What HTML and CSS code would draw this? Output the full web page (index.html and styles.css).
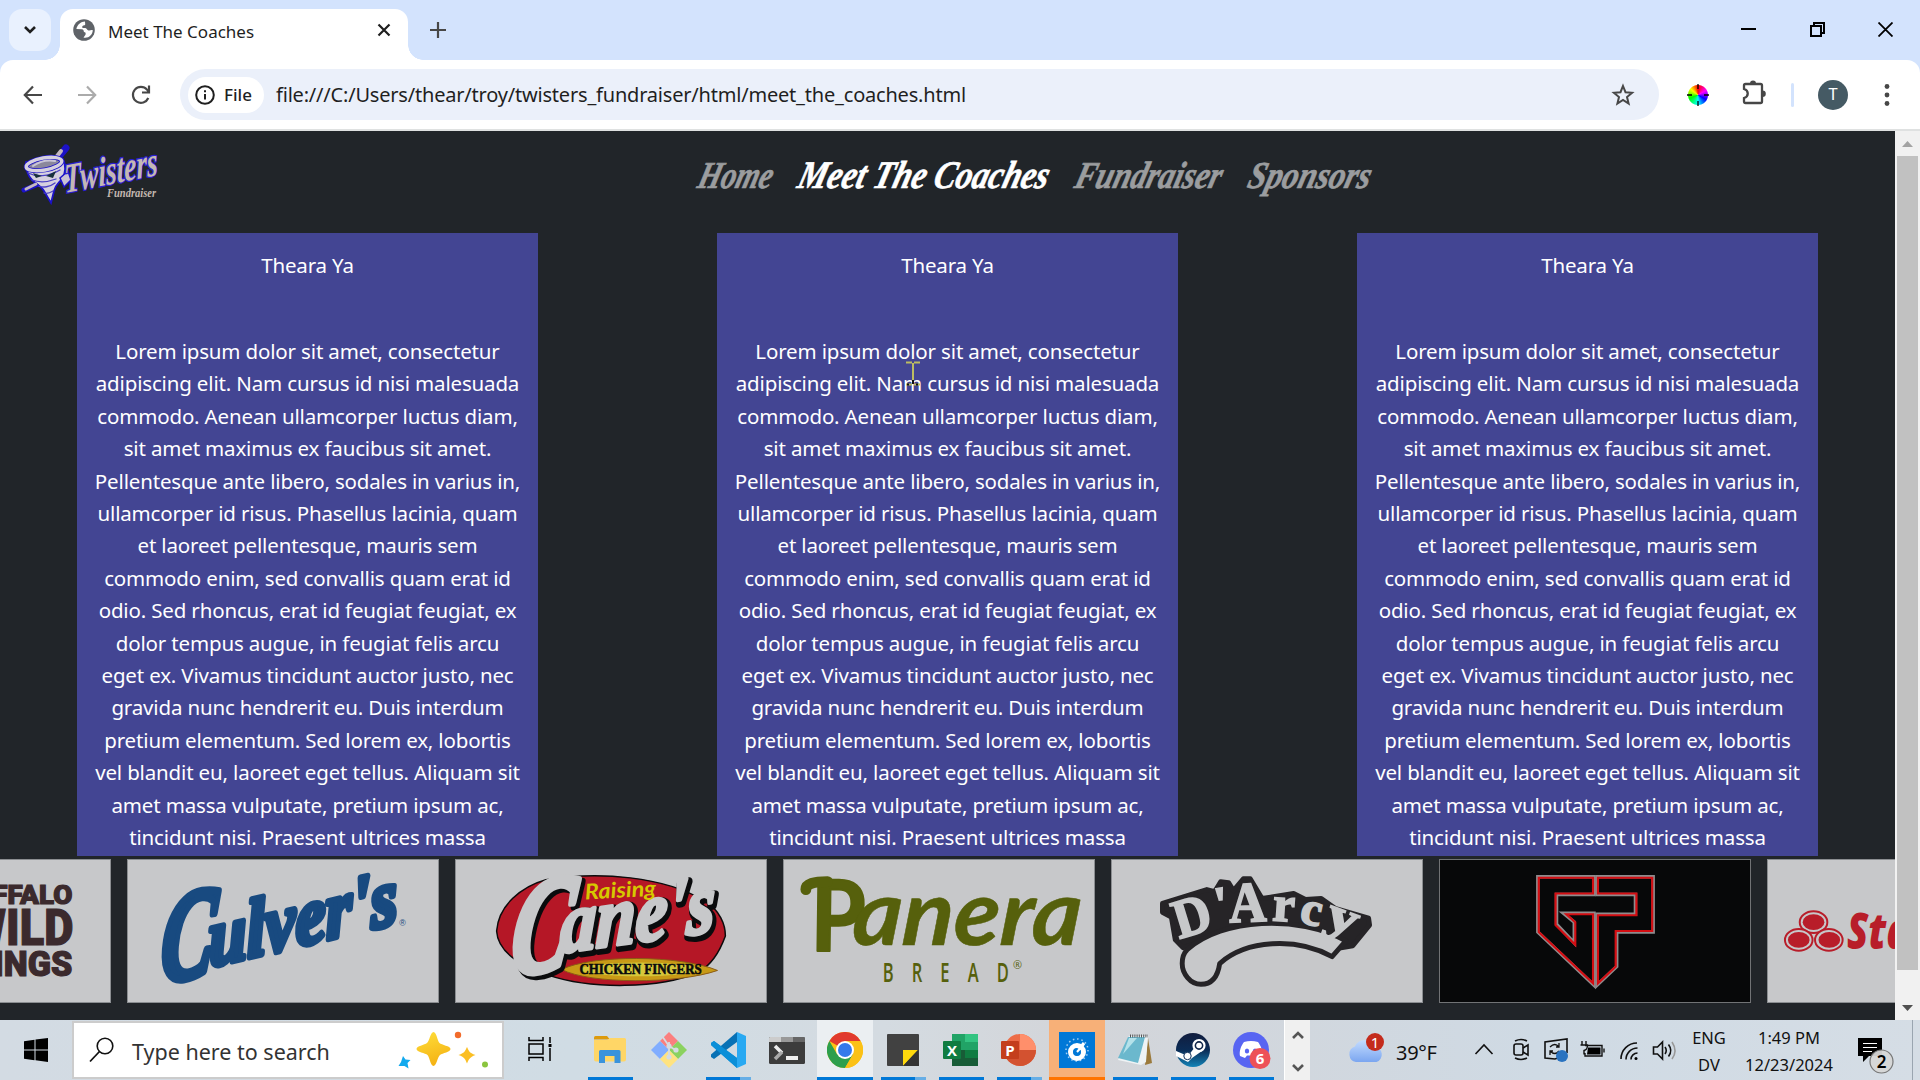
FILE: index.html
```html
<!DOCTYPE html>
<html lang="en">
<head>
<meta charset="utf-8">
<title>Meet The Coaches</title>
<link rel="stylesheet" href="styles.css">
</head>
<body>
<div class="screen">
  <div class="tabstrip">
    <div class="tab-search"><svg width="16" height="16" viewBox="0 0 16 16"><path d="M3 5l5 5 5-5" fill="none" stroke="#1f1f1f" stroke-width="2.6"/></svg></div>
    <div class="tab">
      <svg width="22" height="22" viewBox="0 0 22 22"><circle cx="11" cy="11" r="10.8" fill="#5f6368"/><path d="M12 2.5c-4 0-8 3.500-8.600 7.500l5.300.300c1.800.200 2.200 1.200 2.200 2.800 1.800 0 2 1 1.600 2.600l-2 2.800c5 1 9-2.500 9.300-7.300-1.800-.700-2.500.500-4.300.200-1.600-.300-1.500-2.200-3.200-2.400H9.500c-.800-2 .300-2.500 1.900-2.700 1.400-.200.600-1.700.6-3.800z" fill="#fff"/></svg>
      <span class="tab-title">Meet The Coaches</span>
      <svg class="tab-close" width="14" height="14" viewBox="0 0 14 14"><path d="M1.500 1.500l11 11m0-11l-11 11" stroke="#1f1f1f" stroke-width="2.200"/></svg>
    </div>
    <svg class="new-tab" width="16" height="16" viewBox="0 0 16 16"><path d="M8 0v16M0 8h16" stroke="#474747" stroke-width="2.200"/></svg>
    <div class="window-buttons">
      <svg width="15" height="15" viewBox="0 0 15 15"><path d="M0 7h15" stroke="#000" stroke-width="2"/></svg>
      <svg width="15" height="15" viewBox="0 0 15 15"><path d="M1 4h10v10H1zM4 4V1h10v10h-3" fill="none" stroke="#000" stroke-width="2"/></svg>
      <svg width="15" height="15" viewBox="0 0 15 15"><path d="M.5.500l14 14m0-14l-14 14" stroke="#000" stroke-width="1.800"/></svg>
    </div>
  </div>

  <div class="toolbar-wrap">
  <div class="toolbar">
    <div class="nav-buttons">
      <svg width="20" height="20" viewBox="0 0 20 20"><path d="M19 10H2M10 1.500L1.800 10l8.200 8.500" fill="none" stroke="#474747" stroke-width="2.200"/></svg>
      <svg width="20" height="20" viewBox="0 0 20 20"><path d="M1 10h17M10 1.500l8.200 8.500-8.200 8.500" fill="none" stroke="#ababab" stroke-width="2.200"/></svg>
      <svg width="20" height="20" viewBox="0 0 20 20"><path d="M17.300 13A8 8 0 1 1 16 4.600l2 2.400M18 .500v7h-7" fill="none" stroke="#474747" stroke-width="2.200"/></svg>
    </div>
    <div class="omnibox">
      <div class="chip"><svg width="20" height="20" viewBox="0 0 20 20"><circle cx="10" cy="10" r="8.800" fill="none" stroke="#1f1f1f" stroke-width="2"/><path d="M10 9v5.500M10 5.200v2" stroke="#1f1f1f" stroke-width="2"/></svg><span>File</span></div>
      <span class="url">file:///C:/Users/thear/troy/twisters_fundraiser/html/meet_the_coaches.html</span>
      <svg class="star" width="24" height="24" viewBox="0 0 24 24"><path d="M12 3l2.500 6.200 6.600.500-5.100 4.300 1.600 6.500-5.600-3.500-5.600 3.500L8 14 2.900 9.700l6.600-.5z" fill="none" stroke="#474747" stroke-width="2"/></svg>
    </div>
    <div class="wheel"><svg width="22" height="22" viewBox="0 0 22 22"><path d="M11 0v5M11 17v5M0 11h5M17 11h5" stroke="#000" stroke-width="1.300"/></svg></div>
    <svg class="puzzle" width="24" height="25" viewBox="0 0 24 25"><path d="M2 5.500Q2 4 3.500 4h15Q20 4 20 5.500v16q0 1.500-1.500 1.500h-15Q2 23 2 21.500V18c5-1.500 5-7.500 0-9z" fill="none" stroke="#474747" stroke-width="2.300"/><path d="M8 3.500a3 3 0 0 1 6 0zM20.500 10.500a3.300 3.300 0 0 1 0 6.600z" fill="#474747"/></svg>
    <div class="sep"></div>
    <div class="avatar">T</div>
    <svg class="dots" width="6" height="24" viewBox="0 0 6 24"><g fill="#474747"><circle cx="3" cy="3.500" r="2.400"/><circle cx="3" cy="12" r="2.400"/><circle cx="3" cy="20.500" r="2.400"/></g></svg>
  </div>
  </div>

  <div class="viewport">
    <div class="page">
      <header class="site-header">
        <svg class="brand" width="150" height="66" viewBox="14 140 150 66">
          <g fill="none" stroke-linecap="round">
            <path d="M56 160l10-12" stroke="#1c12c8" stroke-width="7"/>
            <path d="M54 160l7-9" stroke="#c4b8c0" stroke-width="4"/>
            <path d="M26 166c0 9 2 14 6 18 4 4 9 6 12 11l7 12 3-12c2-7 4-7 8-12 4-6 4-14 1-20z" transform="translate(0 -4)" fill="#d5d0df" stroke="#1c12c8" stroke-width="1.800"/>
            <ellipse cx="44" cy="164" rx="18" ry="6" transform="rotate(-10 44 164)" fill="#8b889c" stroke="#1c12c8" stroke-width="5"/>
            <ellipse cx="44" cy="164" rx="18" ry="6" transform="rotate(-10 44 164)" stroke="#d5d0df" stroke-width="3.500"/>
            <path d="M33 166q10-7 22-5" stroke="#c9c5d8" stroke-width="2"/>
            <path d="M28 173c8 4 20 4 32-3M32 180c8 3 16 2 24-1M38 186c5 2 12 1 17-3M44 193c3 1 6 0 9-2" stroke="#4a40c4" stroke-width="1.300"/>
            <path d="M33 173l9 3-6 2zM46 176l10-5-3 7z" fill="#17303c" stroke="none"/>
            <path d="M24 190l12-5" stroke="#1c12c8" stroke-width="5"/><path d="M26 189l10-5" stroke="#c4b8c0" stroke-width="3"/>
            <path d="M60 178l8-7 3 9-7 7z" fill="#c9c3d4" stroke="#1c12c8" stroke-width="1.500"/>
          </g>
          <text transform="translate(65 193) rotate(-11) skewX(-8)" class="brush" font-size="41" textLength="95" lengthAdjust="spacingAndGlyphs" fill="#c4b8b4" stroke="#2a1ed0" stroke-width="2.600" paint-order="stroke">Twisters</text>
          <text x="107" y="197" class="brush" font-size="13" textLength="49" lengthAdjust="spacingAndGlyphs" fill="#c4b8b0">Fundraiser</text>
        </svg>
        <nav class="site-nav">
          <svg width="80" height="50" viewBox="0 0 80 50"><text class="brush" transform="translate(1 37) skewX(-15)" font-size="38" textLength="74" lengthAdjust="spacingAndGlyphs" fill="#9b9d9f" stroke="#9b9d9f">Home</text></svg>
          <svg width="256" height="50" viewBox="0 0 256 50"><text class="brush" transform="translate(0 37) skewX(-15)" font-size="39" textLength="250" lengthAdjust="spacingAndGlyphs" fill="#fff" stroke="#fff">Meet The Coaches</text></svg>
          <svg width="152" height="50" viewBox="0 0 152 50"><text class="brush" transform="translate(0 37) skewX(-15)" font-size="38" textLength="146" lengthAdjust="spacingAndGlyphs" fill="#9b9d9f" stroke="#9b9d9f">Fundraiser</text></svg>
          <svg width="128" height="50" viewBox="0 0 128 50"><text class="brush" transform="translate(0 37) skewX(-15)" font-size="38" textLength="122" lengthAdjust="spacingAndGlyphs" fill="#9b9d9f" stroke="#9b9d9f">Sponsors</text></svg>
        </nav>
      </header>

      <main class="coaches">
        <article class="coach"><h2>Theara Ya</h2><p>Lorem ipsum dolor sit amet, consectetur<br>adipiscing elit. Nam cursus id nisi malesuada<br>commodo. Aenean ullamcorper luctus diam,<br>sit amet maximus ex faucibus sit amet.<br>Pellentesque ante libero, sodales in varius in,<br>ullamcorper id risus. Phasellus lacinia, quam<br>et laoreet pellentesque, mauris sem<br>commodo enim, sed convallis quam erat id<br>odio. Sed rhoncus, erat id feugiat feugiat, ex<br>dolor tempus augue, in feugiat felis arcu<br>eget ex. Vivamus tincidunt auctor justo, nec<br>gravida nunc hendrerit eu. Duis interdum<br>pretium elementum. Sed lorem ex, lobortis<br>vel blandit eu, laoreet eget tellus. Aliquam sit<br>amet massa vulputate, pretium ipsum ac,<br>tincidunt nisi. Praesent ultrices massa</p></article>
        <article class="coach"><h2>Theara Ya</h2><p>Lorem ipsum dolor sit amet, consectetur<br>adipiscing elit. Nam cursus id nisi malesuada<br>commodo. Aenean ullamcorper luctus diam,<br>sit amet maximus ex faucibus sit amet.<br>Pellentesque ante libero, sodales in varius in,<br>ullamcorper id risus. Phasellus lacinia, quam<br>et laoreet pellentesque, mauris sem<br>commodo enim, sed convallis quam erat id<br>odio. Sed rhoncus, erat id feugiat feugiat, ex<br>dolor tempus augue, in feugiat felis arcu<br>eget ex. Vivamus tincidunt auctor justo, nec<br>gravida nunc hendrerit eu. Duis interdum<br>pretium elementum. Sed lorem ex, lobortis<br>vel blandit eu, laoreet eget tellus. Aliquam sit<br>amet massa vulputate, pretium ipsum ac,<br>tincidunt nisi. Praesent ultrices massa</p></article>
        <article class="coach"><h2>Theara Ya</h2><p>Lorem ipsum dolor sit amet, consectetur<br>adipiscing elit. Nam cursus id nisi malesuada<br>commodo. Aenean ullamcorper luctus diam,<br>sit amet maximus ex faucibus sit amet.<br>Pellentesque ante libero, sodales in varius in,<br>ullamcorper id risus. Phasellus lacinia, quam<br>et laoreet pellentesque, mauris sem<br>commodo enim, sed convallis quam erat id<br>odio. Sed rhoncus, erat id feugiat feugiat, ex<br>dolor tempus augue, in feugiat felis arcu<br>eget ex. Vivamus tincidunt auctor justo, nec<br>gravida nunc hendrerit eu. Duis interdum<br>pretium elementum. Sed lorem ex, lobortis<br>vel blandit eu, laoreet eget tellus. Aliquam sit<br>amet massa vulputate, pretium ipsum ac,<br>tincidunt nisi. Praesent ultrices massa</p></article>
      </main>

      <footer class="sponsors">
        <svg class="sponsor" viewBox="-201 859 312 144"><g class="block" fill="#3b2a2d" stroke="#3b2a2d" stroke-width="1.200" text-anchor="end">
          <text x="74" y="903.500" font-size="27" textLength="118" lengthAdjust="spacingAndGlyphs">BUFFALO</text>
          <text x="75" y="945" font-size="50" textLength="108" lengthAdjust="spacingAndGlyphs">WILD</text>
          <text x="74" y="977" font-size="36" textLength="110" lengthAdjust="spacingAndGlyphs">WINGS</text></g></svg>
        <svg class="sponsor" viewBox="127 859 312 144"><g class="brush" fill="#184a80" stroke="#184a80" stroke-linejoin="round">
          <text transform="translate(157 983) rotate(-9) skewX(-14)" font-size="128" textLength="54" lengthAdjust="spacingAndGlyphs" stroke-width="8">C</text>
          <text transform="translate(209 967) rotate(-13) skewX(-10)" font-size="82" textLength="196" lengthAdjust="spacingAndGlyphs" stroke-width="6">ulver's</text></g>
          <text x="401" y="926" font-size="9" font-family="Liberation Sans, sans-serif" fill="#184a80">®</text></svg>
        <svg class="sponsor" viewBox="455 859 312 144">
          <path d="M495 931C497 905 520 886 545 879 600 870 665 876 705 900 722 910 727 925 727 936 720 955 712 965 700 973 660 990 590 990 548 976 515 965 496 950 495 931z" fill="#b51726" stroke="#0b0b0c" stroke-width="1.500"/>
          <path d="M561 970c30-15 120-15 158 1-40 14-130 14-158-1z" fill="#c89a16" stroke="#8a5a14" stroke-width="1"/>
          <ellipse cx="640" cy="970" rx="60" ry="7" fill="#d6c83a"/>
          <g class="brush" fill="#0a0b0d" stroke="#0a0b0d" stroke-width="9" stroke-linejoin="round">
            <text transform="translate(509 978) rotate(-6) skewX(-14)" font-size="138" textLength="60" lengthAdjust="spacingAndGlyphs">C</text>
            <text transform="translate(561 956) rotate(-8) skewX(-10)" font-size="86" textLength="158" lengthAdjust="spacingAndGlyphs">ane's</text></g>
          <g class="brush" fill="#c7c8ca" stroke="#c7c8ca" stroke-width="7" stroke-linejoin="round">
            <text transform="translate(506 975) rotate(-6) skewX(-14)" font-size="138" textLength="60" lengthAdjust="spacingAndGlyphs">C</text>
            <text transform="translate(559 953) rotate(-8) skewX(-10)" font-size="86" textLength="158" lengthAdjust="spacingAndGlyphs" stroke-width="4">ane's</text></g>
          <text transform="translate(585 899) rotate(-3)" font-family="Lato, sans-serif" font-weight="700" font-style="italic" font-size="22" textLength="72" lengthAdjust="spacingAndGlyphs" fill="#d6c800">Raising</text>
          <text x="579" y="975" font-family="Liberation Serif, serif" font-weight="700" font-size="15" textLength="124" lengthAdjust="spacingAndGlyphs" fill="#0a0b0d" stroke="#0a0b0d" stroke-width=".6">CHICKEN FINGERS</text></svg>
        <svg class="sponsor" viewBox="783 859 312 144"><g fill="#56600c" stroke="#56600c" font-family="Lato, sans-serif" font-style="italic" stroke-linejoin="round">
          <text transform="translate(812 951) skewX(6)" font-weight="700" font-size="100" textLength="56" lengthAdjust="spacingAndGlyphs" stroke-width="2">P</text>
          <path d="M804 889c0-6 8-8 22-8" fill="none" stroke-width="11" stroke-linecap="round"/>
          <text transform="translate(850 945) skewX(-4)" font-weight="700" font-size="92" textLength="232" lengthAdjust="spacingAndGlyphs" stroke-width=".5">anera</text></g>
          <g class="condensed" fill="#56600c"><text transform="translate(882 983) scale(.62 1)" font-size="27" font-weight="600" textLength="206">BREAD</text><text x="1014" y="970" font-size="11">®</text></g></svg>
        <svg class="sponsor" viewBox="1111 859 312 144">
          <g stroke="#262427" stroke-width="5" stroke-linejoin="round">
            <path d="M1161 903L1206 889 1214 891 1220 881 1228 882 1233 890 1243 878 1250 878 1262 898 1294 893 1306 899 1322 898 1336 908 1370 918 1371 925 1354 946 1342 948Q1283 912 1182 948L1174 940 1170 917 1161 912z" fill="#262427"/>
            <path d="M1186 950C1222 918 1298 914 1347 941L1333 957C1296 937 1246 940 1219 964 1217 978 1211 985 1200 985 1189 985 1181 974 1181 964 1181 957 1183 953 1186 950z" fill="#c7c8ca"/></g>
          <g font-family="Liberation Serif, serif" font-weight="700" fill="#c7c8ca" stroke="#c7c8ca" stroke-width="1.800">
            <text transform="translate(1178 939) rotate(-17)" font-size="56" textLength="38" lengthAdjust="spacingAndGlyphs">D</text>
            <text transform="translate(1216 921) rotate(-8)" font-size="50">'</text>
            <text transform="translate(1229 922) rotate(-2)" font-size="58" textLength="38" lengthAdjust="spacingAndGlyphs">A</text>
            <text transform="translate(1272 920) rotate(4)" font-size="50">r</text>
            <text transform="translate(1299 922) rotate(12)" font-size="48">c</text>
            <text transform="translate(1324 926) rotate(20)" font-size="48" textLength="32" lengthAdjust="spacingAndGlyphs">y</text></g></svg>
        <svg class="sponsor dark" viewBox="1439 859 312 144"><g fill="none" stroke="#8f8b8d" stroke-width="3.500">
          <path d="M1537 876h57v18h-38v30l18 19v-21l-11-9h31v73l-57-54z"/><path d="M1597 876h57v56h-37v35l-20 19v-72h39v-20h-39z"/></g>
          <g fill="none" stroke="#d40d12" stroke-width="2.200"><path d="M1538 877h55v16h-38v32l20 20v-23l-9-8h27v70l-55-52zM1598 877h55v54h-37v36l-18 17v-69h39v-22h-39z"/></g></svg>
        <svg class="sponsor" viewBox="1767 859 312 144"><g fill="#c7c8ca" stroke="#b81d29" stroke-width="2"><ellipse cx="1812" cy="922" rx="14" ry="11"/><ellipse cx="1797" cy="940" rx="14" ry="11"/><ellipse cx="1827.500" cy="940" rx="14" ry="11"/></g><g fill="#b81d29"><ellipse cx="1812" cy="922" rx="11" ry="8"/><ellipse cx="1797" cy="940" rx="11" ry="8"/><ellipse cx="1828" cy="940" rx="11" ry="8"/>
          <text x="1846" y="949" font-family="Open Sans, sans-serif" font-weight="800" font-style="italic" font-size="51" textLength="215" lengthAdjust="spacingAndGlyphs">State Farm</text></g></svg>
      </footer>
    </div>
    <div class="scrollbar">
      <svg width="25" height="25" viewBox="0 0 25 25"><path d="M7 16l5.500-6 5.500 6z" fill="#a3a3a3"/></svg>
      <div class="thumb"></div>
      <svg width="25" height="25" viewBox="0 0 25 25"><path d="M7 10l5.500 6 5.500-6z" fill="#505050"/></svg>
    </div>
    <svg class="cursor" width="14" height="25" viewBox="0 0 14 25"><path d="M0 1.500h6m2 0h6M7 2v20" stroke="#bdbd62" stroke-width="2"/><path d="M0 23.500h6m2 0h6" stroke="#bdbd62" stroke-width="2"/><path d="M7 19v4M1 23.500h2M10 23.500h2" stroke="#111" stroke-width="2"/></svg>
  </div>

  <div class="taskbar">
    <div class="start"><svg width="24" height="24" viewBox="0 0 24 24"><path d="M0 3.300L10.500 1.800v9.700H0zM11.500 1.600L24 0v11.500H11.500zM0 12.500h10.500v9.700L0 20.700zM11.500 12.500H24V24l-12.500-1.700z"/></svg></div>
    <div class="search">
      <svg width="26" height="26" viewBox="0 0 26 26"><circle cx="16" cy="9" r="7.800" fill="none" stroke="#111" stroke-width="1.600"/><path d="M10.500 14.500L1 24.500" stroke="#111" stroke-width="1.800"/></svg>
      <span>Type here to search</span>
      <svg width="90" height="38" viewBox="397 1031 90 38"><defs><linearGradient id="gold" x2=".3" y2="1"><stop stop-color="#ffdf3a"/><stop offset="1" stop-color="#f5b416"/></linearGradient></defs><path d="M432.500 1032c3 0 4 9 6 11s11 3 11 6-8 4-10.500 6-3.500 11-6.500 11-4-9-6-11-11-3-11-6 8-4 10.500-6 3.500-11 6.500-11z" fill="url(#gold)"/><path d="M466 1047c1.500 3 2 6 8.500 8-6 2-7 5-8.500 8.500-1.500-3.500-2-6.500-8.500-8.500 6.500-2 7-5 8.500-8z" fill="#fbbf24"/><path d="M402 1056l2.500 3.500 5 .500-3 3 1 5.500-4-2.500-6 0 2.500-4z" fill="#12a9ee"/><circle cx="457" cy="1035" r="3.200" fill="#f26b2b"/><circle cx="484" cy="1064.500" r="3" fill="#8bc53f"/></svg>
    </div>
    <div class="task-view"><svg width="24" height="24" viewBox="0 0 24 24"><path d="M1 0v3.500h14V0M1 24v-3.500h14V24M1 7h14v10H1zM22 0v6M22 11v13" fill="none" stroke="#000" stroke-width="1.500"/><path d="M20.500 7h3v3h-3z"/></svg></div>
    <div class="apps">
      <div class="app run"><svg width="32" height="28" viewBox="0 0 32 28"><path d="M0 1.500Q0 0 1.500 0H13l3 3.500H0z" fill="#dd9a0b"/><path d="M0 4h13l3-2h14.500Q32 2 32 3.500v20q0 2-2 2H2q-2 0-2-2z" fill="#ffd666"/><path d="M5 27V15.500Q5 14 6.500 14h18.500q1.500 0 1.500 1.500V27h-6v-7h-9.500v7z" fill="#3a93dc"/></svg></div>
      <div class="app"><svg width="36" height="36" viewBox="0 0 36 36"><g stroke-width="1.500"><path d="M18 0l9 9-9 9-9-9z" fill="#fb7f7f"/><path d="M9 9l9 9-9 9-9-9z" fill="#80adff"/><path d="M27 9l9 9-9 9-9-9z" fill="#8bd260"/><path d="M18 18l9 9-9 9-9-9z" fill="#ffe380"/></g><path d="M18 10v16M18 14l8 5M11 4l7 10" stroke="#d4dce3" stroke-width="1.800"/><g fill="#d4dce3"><circle cx="18" cy="14" r="2.600"/><circle cx="18" cy="25" r="2.600"/><circle cx="25" cy="18" r="2.600"/></g></svg></div>
      <div class="app run split"><svg width="36" height="36" viewBox="0 0 36 36"><path d="M1 11l3-2 23 17v10L1 13z" fill="#0b8fd8"/><path d="M1 25l3 2L27 10V0L1 22.500z" fill="#0871b5"/><path d="M4 9l23 17v10L1 13v-2z" fill="#0b8fd8"/><path d="M27 0l9 4v28l-9 4z" fill="#29a9f2"/></svg></div>
      <div class="app"><svg width="36" height="27" viewBox="0 0 36 27"><rect width="36" height="27" rx="1.500" fill="#3c3c3c"/><path d="M1 0h11v5H0V1z" fill="#ccc"/><path d="M12 0h12v5H12z" fill="#999"/><path d="M24 0h11l1 1v4H24z" fill="#666"/><path d="M6 9l7 7" stroke="#eee" stroke-width="3.500"/><path d="M13 15l-7 7" stroke="#aaa" stroke-width="3.500"/><path d="M17 19h12v4H17z" fill="#eee"/></svg></div>
      <div class="app run active"><svg width="36" height="36" viewBox="0 0 36 36"><circle cx="18" cy="18" r="18" fill="#fbc116"/><path d="M18 18L2.400 9A18 18 0 0 1 33.600 9z" fill="#e13a2e"/><path d="M2.400 9A18 18 0 0 0 18 36l7.800-13.500L18 18 10.200 22.500z" fill="#2d9f4d"/><path d="M18 9h15.600a18 18 0 0 1-15.600 27l8-13.500z" fill="#fbc116"/><circle cx="18" cy="18" r="9" fill="#fff"/><circle cx="18" cy="18" r="7" fill="#3479eb"/></svg></div>
      <div class="app run split"><svg width="32" height="32" viewBox="0 0 32 32"><rect width="32" height="32" rx="1" fill="#414141"/><path d="M16 32V16h15z" fill="#ffd90d"/><path d="M31 16L16 32h16z" fill="#333"/></svg></div>
      <div class="app run"><svg width="36" height="32" viewBox="0 0 36 32"><path d="M9 0h26v32H9z" fill="#21a366"/><path d="M22 0h13v8H22z" fill="#33c481"/><path d="M9 16h26v16H9z" fill="#185c37"/><path d="M22 16h13v8H22z" fill="#107c41"/><rect y="7" width="18" height="18" rx="1" fill="#107c41"/><text x="9" y="22" class="glyph">X</text></svg></div>
      <div class="app run split"><svg width="36" height="32" viewBox="0 0 36 32"><circle cx="19" cy="16" r="16" fill="#ed6c47"/><path d="M19 0a16 16 0 0 1 16 16H19z" fill="#ff8f6b"/><path d="M3 16h32a16 16 0 0 1-32 0z" fill="#d35230"/><rect y="7" width="18" height="18" rx="1" fill="#c43e1c"/><text x="9" y="22" class="glyph">P</text></svg></div>
      <div class="app run alert"><svg width="36" height="36" viewBox="0 0 36 36"><path d="M0 0h36v36H0z" fill="#0078d7"/><circle cx="18" cy="18" r="11" fill="none" stroke="#a8d0f2" stroke-width="1.500" stroke-dasharray="1.500 2.800"/><circle cx="18" cy="20" r="6.500" fill="none" stroke="#fff" stroke-width="5"/><path d="M17 21l8-10" stroke="#fff" stroke-width="3"/><circle cx="18" cy="20" r="3.500" fill="#0078d7"/><path d="M18 20l7-8" stroke="#fff" stroke-width="2"/></svg></div>
      <div class="app run"><svg width="34" height="32" viewBox="0 0 34 32"><path d="M30 4l4 25-7 2z" fill="#9b7a3c"/><path d="M11 2h19l-2 26-5 3-23-5z" fill="#eef3f5"/><path d="M10 3h17l-7 26-20-5z" fill="#6bb8cd"/><path d="M11 4l-6 16 14-16z" fill="#b5e2ea"/><path d="M12 2h18" stroke="#555" stroke-width="3" stroke-dasharray="1 1.200"/></svg></div>
      <div class="app run"><svg width="34" height="34" viewBox="0 0 34 34"><defs><linearGradient id="stm" x2="0" y2="1"><stop stop-color="#111d3e"/><stop offset=".5" stop-color="#0b2c56"/><stop offset="1" stop-color="#1484b8"/></linearGradient></defs><circle cx="17" cy="17" r="17" fill="url(#stm)"/><path d="M0 18l12 5 7-9 7 4-10 7-4 4-12-6z" fill="#fff"/><circle cx="23" cy="12.500" r="5.500" fill="#10264a" stroke="#fff" stroke-width="2.200"/><circle cx="23" cy="12.500" r="2.800" fill="#fff"/><circle cx="11.500" cy="23" r="3.700" fill="#fff" stroke="#10305a"/></svg></div>
      <div class="app run"><svg width="42" height="38" viewBox="-3 -1 42 38"><circle cx="18" cy="18" r="18" fill="#5865f2"/><path d="M11 10q7-2 14 0c3 4 5 9 4 14l-5 2-2-2.500h-8L12 26l-5-2c-1-5 1-10 4-14z" fill="#fff"/><ellipse cx="14" cy="19" rx="2.200" ry="2.500" fill="#5865f2"/><ellipse cx="22" cy="19" rx="2.200" ry="2.500" fill="#5865f2"/><circle cx="27" cy="26.500" r="10.500" fill="#ed5157"/><text x="27" y="32" class="glyph">6</text></svg></div>
    </div>
    <div class="app-scroll"><svg width="12" height="8" viewBox="0 0 12 8"><path d="M1 7l5-5 5 5" fill="none" stroke="#555" stroke-width="2.600"/></svg><svg width="12" height="8" viewBox="0 0 12 8"><path d="M1 1l5 5 5-5" fill="none" stroke="#555" stroke-width="2.600"/></svg></div>
    <div class="weather"><svg width="37" height="30" viewBox="1348 1032 37 30"><defs><linearGradient id="cl" x2="0" y2="1"><stop stop-color="#c4dcff"/><stop offset="1" stop-color="#7ba6f0"/></linearGradient></defs><path d="M1356 1061a8 8 0 0 1-1-15.500 10.500 10.500 0 0 1 19.500 0 8 8 0 0 1 2 15.500z" fill="url(#cl)"/><circle cx="1375" cy="1041" r="9" fill="#c42b1c"/><text x="1375" y="1046.500" text-anchor="middle" font-size="15" fill="#fff">1</text></svg><span>39°F</span></div>
    <svg class="tray" width="212" height="30" viewBox="1470 1034 212 30"><g fill="none" stroke="#111" stroke-width="1.600">
      <path d="M1475.500 1054l8.500-9 8.500 9"/>
      <path d="M1515 1041q6-3 12 0M1515 1058q6 3 12 0"/><rect x="1514" y="1044" width="9" height="11" rx="2"/><path d="M1523 1048l5-3v10l-5-3"/>
      <path d="M1561 1057l-6 2-10-1v-16l22-3v14"/><path d="M1550 1047q5-5 9 0m0-4v4h-3M1559 1051q-4 5-9 0m0 4v-4h3" stroke-width="1.300"/>
      <path d="M1585 1045.500h17v10.500h-17v-3M1604 1048.500v4M1582 1041v4M1586 1041v4M1580.500 1045h7q0 5-3.500 5.500v4" stroke-width="1.400"/><path d="M1588 1047.500h12.500v7H1587z" fill="#000" stroke="none"/>
      <path d="M1621 1059a16 16 0 0 1 16-16M1626 1059.500a11.500 11.500 0 0 1 11.500-11.500M1631 1059.500a6.500 6.500 0 0 1 6.500-6.500"/><circle cx="1636" cy="1058.500" r="1.500" fill="#000" stroke="none"/>
      <path d="M1653.500 1047h4l5-5v17l-5-5h-4z"/><path d="M1665 1047q2.500 3.500 0 7M1668.500 1044.500q4.500 6 0 12"/><path d="M1672 1042q6 9 0 17" stroke="#999"/></g><circle cx="1562" cy="1056" r="6" fill="#2a73c0"/></svg>
    <div class="stack lang"><span>ENG</span><span>DV</span></div>
    <div class="stack clock"><span>1:49 PM</span><span>12/23/2024</span></div>
    <svg class="notify" width="38" height="38" viewBox="1856 1036 38 38"><path d="M1858 1038h24v18h-13l-6 6v-6h-5z"/><path d="M1863 1043.500h14M1863 1047.500h14M1863 1051.500h9" stroke="#fff" stroke-width="1.200"/><circle cx="1881.500" cy="1061.500" r="11.500" fill="#d6d6d6" stroke="#777" stroke-width="1.200" fill-opacity=".95"/><text x="1881.500" y="1068" text-anchor="middle" font-size="17" font-weight="600">2</text></svg>
    <div class="show-desktop"></div>
  </div>
</div>
</body>
</html>
```

FILE: styles.css
```css
* { box-sizing: border-box; }
body { margin: 0; overflow: hidden; font-family: "Noto Sans", "Open Sans", sans-serif; }
svg { display: block; flex: none; }
.screen { width: 1920px; height: 1080px; display: flex; flex-direction: column; }

.tabstrip { height: 60px; padding: 9px 27px 0 9px; display: flex; background: #d3e3fd; }
.tab-search { width: 42px; height: 42px; border-radius: 13px; background: #e9f1fe; display: grid; place-items: center; }
.tab { position: relative; width: 348px; height: 51px; margin-left: 9px; padding: 0 17px 9px 13px; border-radius: 13px 13px 0 0; background: #fff; display: flex; align-items: center; }
.tab::before, .tab::after { content: ""; position: absolute; bottom: 0; width: 15px; height: 15px; }
.tab::before { left: -15px; background: radial-gradient(circle at 0 0, transparent 14.5px, #fff 15px); }
.tab::after { right: -15px; background: radial-gradient(circle at 100% 0, transparent 14.5px, #fff 15px); }
.tab-title { margin-left: 13px; padding-top: 3px; font-size: 17px; color: #1f1f1f; white-space: nowrap; }
.tab-close { margin-left: auto; }
.new-tab { margin: 13px 0 0 22px; }
.window-buttons { margin: 13px 0 0 auto; display: flex; gap: 53.5px; }

.toolbar-wrap { height: 71px; background: #d3e3fd; }
.toolbar { height: 71px; padding: 9px 30px 9px 23px; border-bottom: 2px solid #dfe1e1; border-radius: 13px 13px 0 0; background: #fff; display: flex; align-items: center; }
.nav-buttons { display: flex; gap: 34px; width: 157px; }
.omnibox { width: 1479px; height: 51px; padding: 0 24px 0 8px; border-radius: 26px; background: #ebf0fa; display: flex; align-items: center; }
.chip { width: 76px; height: 36px; padding-left: 7px; border-radius: 18px; background: #fff; display: flex; align-items: center; gap: 9px; font-size: 17px; font-weight: 500; color: #1f1f1f; }
.url { margin-left: 12px; font-size: 20px; letter-spacing: -.2px; color: #1f1f1f; white-space: nowrap; }
.star { margin-left: auto; }
.wheel { width: 22px; height: 22px; margin-left: 28px; border-radius: 50%; background: radial-gradient(circle, transparent 9.5px, #fff 10.5px), conic-gradient(#f00, #f0f 60deg, #00f 120deg, #0ff 180deg, #0f0 250deg, #ff0 310deg, #f00); }
.puzzle { margin: -4px 0 0 33px; }
.sep { width: 3px; height: 24px; margin-left: 25px; border-radius: 2px; background: #d3e3fd; }
.avatar { width: 30px; height: 30px; margin-left: 24px; border-radius: 50%; background: #455a64; color: #fff; font: 16px/30px Roboto, sans-serif; text-align: center; }
.dots { margin-left: auto; }

.viewport { position: relative; height: 889px; display: flex; background: #212529; }
.page { width: 1895px; height: 889px; overflow: hidden; }
.site-header { height: 102px; display: flex; }
.site-header svg { overflow: visible; }
.brand { margin: 9px 0 0 14px; }
.brush { font-family: "Liberation Serif", serif; font-weight: 700; font-style: italic; }
.block { font-family: "Roboto", sans-serif; font-weight: 900; }
.condensed { font-family: "Open Sans", sans-serif; }
.site-nav { margin: 20px 0 0 531px; display: flex; gap: 21px; }
.site-nav text { stroke-width: .7px; }
.coaches { padding-left: 77px; display: grid; grid-template-columns: repeat(3, 461px); gap: 179px; }
.coach { height: 623px; padding-top: 16px; background: #434593; color: #fff; text-align: center; overflow: hidden; white-space: nowrap; font-size: 20.500px; letter-spacing: -.16px; line-height: 32.400px; }
.coach h2 { margin: 0 0 53.600px; font: inherit; }
.coach p { margin: 0; }
.sponsors { margin: 3px 0 0 -201px; display: flex; gap: 16px; }
.sponsor { width: 312px; height: 144px; border: 1px solid #8b8e91; background: #c7c8ca; }
.sponsor.dark { background: #070809; border-color: #717375; }
.scrollbar { width: 25px; background: #f1f1f1; display: flex; flex-direction: column; }
.thumb { width: 21px; height: 814px; margin: 0 auto 25px; background: #c1c1c1; }
.cursor { position: absolute; left: 906px; top: 230px; }

.taskbar { height: 60px; display: flex; background: linear-gradient(90deg, #d3dbe3, #d0dce4 30%, #d4dbe1 46%, #d3d5d9 56%, #d1d7de 68%, #cfdae4 80%, #d5dde5); color: #111; }
.start { width: 72px; display: grid; place-items: center; }
.search { width: 432px; height: 58px; margin-top: 1px; padding: 0 14px 0 15px; border: 2px solid #ccc; background: #fff; display: flex; align-items: center; }
.search span { margin: 2px 0 0 17px; font-size: 21.500px; color: #333; white-space: nowrap; }
.search svg:last-child { margin-left: auto; }
.task-view { width: 76px; padding: 17px 0 0 24px; }
.apps { width: 700px; display: grid; grid-template-columns: repeat(4, 59px) repeat(8, 58px); }
.app { width: 56px; height: 60px; margin: 0 auto; display: grid; place-items: center; background: linear-gradient(#0078d7, #0078d7) no-repeat 6px 57px / 0 3px; }
.app.run { background-size: 45px 3px; }
.app.split { background-image: linear-gradient(90deg, #0078d7 75%, #66aee6 75%); }
.app.active { background-color: #ebeff2; background-position: 0 57px; background-size: 56px 3px; }
.app.alert { background: linear-gradient(#ff7400, #ff7400) no-repeat 0 57px / 56px 3px #f7b078; }
.glyph { font: 700 15px "Open Sans", sans-serif; fill: #fff; text-anchor: middle; }
.app-scroll { width: 26px; margin-left: 4px; padding: 11px 0 8px; border-left: 1px solid #fff; background: #f0f0f0; display: flex; flex-direction: column; justify-content: space-between; align-items: center; }
.weather { width: 128px; margin-left: 38px; display: flex; align-items: center; gap: 11px; padding-bottom: 5px; }
.weather span { padding-top: 9px; font-size: 20px; letter-spacing: -.3px; }
.tray { margin: 14px 0 0 -6px; }
.stack { display: flex; flex-direction: column; align-items: center; padding-top: 4px; font-size: 16.500px; line-height: 27px; white-space: nowrap; }
.lang { width: 50px; margin-left: 2px; }
.clock { width: 110px; }
.notify { margin: 16px 0 0 12px; }
.show-desktop { width: 8px; margin-left: auto; border-left: 1px solid #9aa5b0; }
```
